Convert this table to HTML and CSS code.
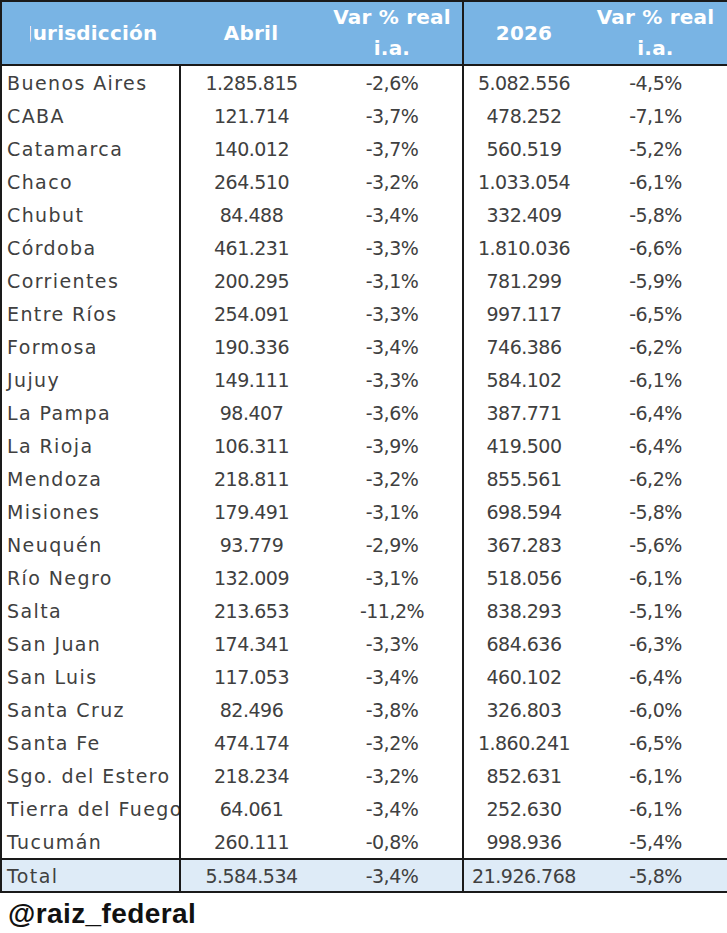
FILE: index.html
```html
<!DOCTYPE html>
<html lang="es">
<head>
<meta charset="utf-8">
<title>Recaudación por jurisdicción</title>
<link rel="stylesheet" href="styles.css">
</head>
<body>
<table class="tbl">
<colgroup>
<col class="c1"><col class="c2"><col class="c3"><col class="c4"><col class="c5">
</colgroup>
<thead>
<tr class="head">
<th class="name-h"><div class="clip"><span class="shift">Jurisdicción</span></div></th>
<th>Abril</th>
<th class="sep-r">Var % real<br>i.a.</th>
<th>2026</th>
<th>Var % real<br>i.a.</th>
</tr>
</thead>
<tbody>
<tr><td class="name">Buenos Aires</td><td>1.285.815</td><td class="sep-r">-2,6%</td><td>5.082.556</td><td>-4,5%</td></tr>
<tr><td class="name">CABA</td><td>121.714</td><td class="sep-r">-3,7%</td><td>478.252</td><td>-7,1%</td></tr>
<tr><td class="name">Catamarca</td><td>140.012</td><td class="sep-r">-3,7%</td><td>560.519</td><td>-5,2%</td></tr>
<tr><td class="name">Chaco</td><td>264.510</td><td class="sep-r">-3,2%</td><td>1.033.054</td><td>-6,1%</td></tr>
<tr><td class="name">Chubut</td><td>84.488</td><td class="sep-r">-3,4%</td><td>332.409</td><td>-5,8%</td></tr>
<tr><td class="name">Córdoba</td><td>461.231</td><td class="sep-r">-3,3%</td><td>1.810.036</td><td>-6,6%</td></tr>
<tr><td class="name">Corrientes</td><td>200.295</td><td class="sep-r">-3,1%</td><td>781.299</td><td>-5,9%</td></tr>
<tr><td class="name">Entre Ríos</td><td>254.091</td><td class="sep-r">-3,3%</td><td>997.117</td><td>-6,5%</td></tr>
<tr><td class="name">Formosa</td><td>190.336</td><td class="sep-r">-3,4%</td><td>746.386</td><td>-6,2%</td></tr>
<tr><td class="name">Jujuy</td><td>149.111</td><td class="sep-r">-3,3%</td><td>584.102</td><td>-6,1%</td></tr>
<tr><td class="name">La Pampa</td><td>98.407</td><td class="sep-r">-3,6%</td><td>387.771</td><td>-6,4%</td></tr>
<tr><td class="name">La Rioja</td><td>106.311</td><td class="sep-r">-3,9%</td><td>419.500</td><td>-6,4%</td></tr>
<tr><td class="name">Mendoza</td><td>218.811</td><td class="sep-r">-3,2%</td><td>855.561</td><td>-6,2%</td></tr>
<tr><td class="name">Misiones</td><td>179.491</td><td class="sep-r">-3,1%</td><td>698.594</td><td>-5,8%</td></tr>
<tr><td class="name">Neuquén</td><td>93.779</td><td class="sep-r">-2,9%</td><td>367.283</td><td>-5,6%</td></tr>
<tr><td class="name">Río Negro</td><td>132.009</td><td class="sep-r">-3,1%</td><td>518.056</td><td>-6,1%</td></tr>
<tr><td class="name">Salta</td><td>213.653</td><td class="sep-r">-11,2%</td><td>838.293</td><td>-5,1%</td></tr>
<tr><td class="name">San Juan</td><td>174.341</td><td class="sep-r">-3,3%</td><td>684.636</td><td>-6,3%</td></tr>
<tr><td class="name">San Luis</td><td>117.053</td><td class="sep-r">-3,4%</td><td>460.102</td><td>-6,4%</td></tr>
<tr><td class="name">Santa Cruz</td><td>82.496</td><td class="sep-r">-3,8%</td><td>326.803</td><td>-6,0%</td></tr>
<tr><td class="name">Santa Fe</td><td>474.174</td><td class="sep-r">-3,2%</td><td>1.860.241</td><td>-6,5%</td></tr>
<tr><td class="name">Sgo. del Estero</td><td>218.234</td><td class="sep-r">-3,2%</td><td>852.631</td><td>-6,1%</td></tr>
<tr><td class="name"><div class="cut">Tierra del Fuego</div></td><td>64.061</td><td class="sep-r">-3,4%</td><td>252.630</td><td>-6,1%</td></tr>
<tr><td class="name">Tucumán</td><td>260.111</td><td class="sep-r">-0,8%</td><td>998.936</td><td>-5,4%</td></tr>
</tbody>
<tfoot>
<tr class="total"><td class="name">Total</td><td>5.584.534</td><td class="sep-r">-3,4%</td><td>21.926.768</td><td>-5,8%</td></tr>
</tfoot>
</table>
<div class="handle">@raiz_federal</div>
</body>
</html>
```

FILE: styles.css
```css
html, body {
  margin: 0;
  padding: 0;
  background: #ffffff;
}
body {
  width: 727px;
  height: 933px;
  overflow: hidden;
}
.tbl {
  width: 727px;
  border-collapse: collapse;
  table-layout: fixed;
  font-family: "DejaVu Sans", sans-serif;
  font-size: 19px;
  letter-spacing: -0.5px;
  color: #404040;
  border: 2px solid #1a1a1a;
}
.c1 { width: 179px; }
.c2 { width: 142px; }
.c3 { width: 141px; }
.c4 { width: 121px; }
.c5 { width: 144px; }
.head th {
  background: #79b4e4;
  color: #ffffff;
  font-weight: bold;
  font-size: 20px;
  letter-spacing: 0.2px;
  line-height: 31px;
  height: 62px;
  padding: 0;
  text-align: center;
  vertical-align: middle;
  border-bottom: 2px solid #1a1a1a;
}
.head th.name-h {
  text-align: left;
}
.clip {
  margin-left: 28px;
  width: 150px;
  overflow: hidden;
  white-space: nowrap;
}
.shift {
  display: inline-block;
  margin-left: -5px;
}
.sep-r {
  border-right: 2px solid #1a1a1a;
}
tbody td {
  height: 33px;
  padding: 0;
  text-align: center;
  vertical-align: middle;
  white-space: nowrap;
}
tfoot td {
  height: 31px;
  padding: 0;
  text-align: center;
  vertical-align: middle;
  white-space: nowrap;
}
td.name {
  text-align: left;
  padding-left: 5px;
  letter-spacing: 1.4px;
  border-right: 2px solid #1a1a1a;
}
.cut {
  overflow: hidden;
  white-space: nowrap;
}
.total td {
  background: #deebf7;
  border-top: 2px solid #1a1a1a;
}
.handle {
  font-family: "Liberation Sans", Arial, sans-serif;
  font-weight: bold;
  font-size: 28px;
  letter-spacing: 0.4px;
  color: #111111;
  padding: 5px 0 0 8px;
}
```
